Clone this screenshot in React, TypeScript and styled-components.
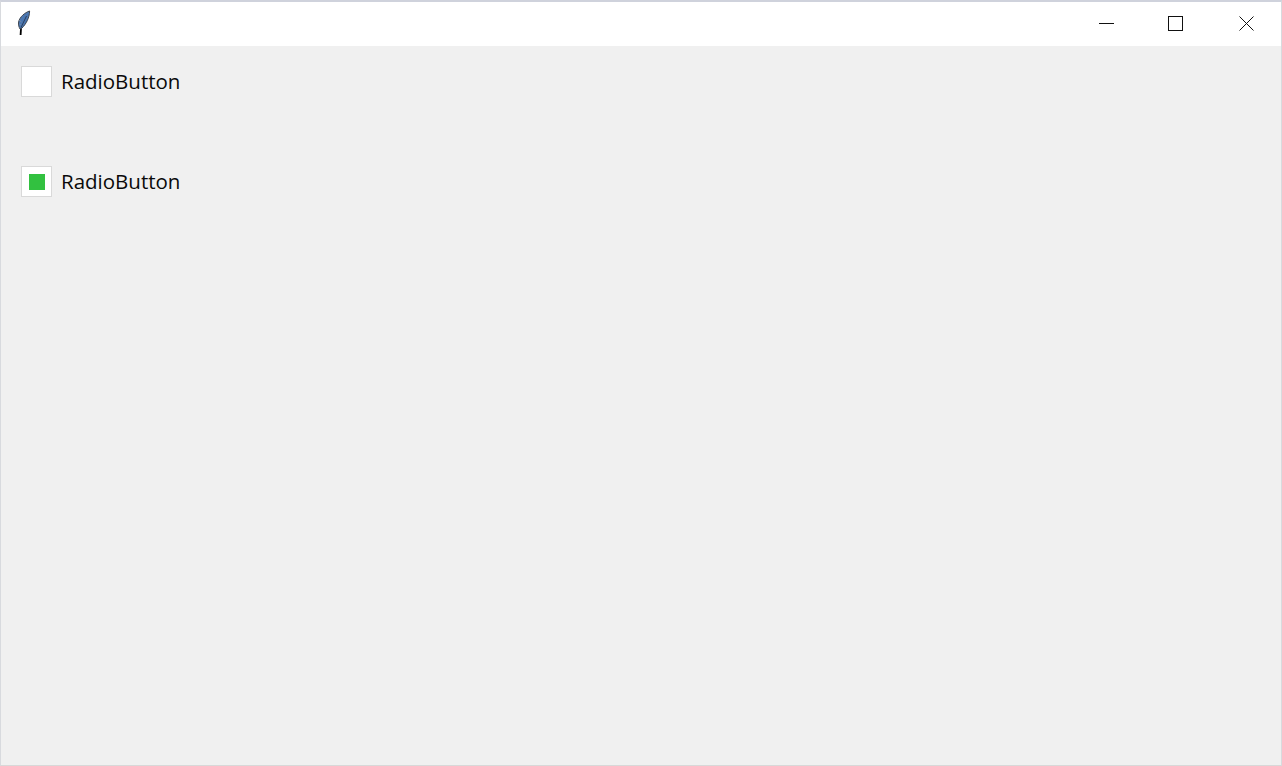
import React from "react";
import styled, { createGlobalStyle } from "styled-components";

const Global = createGlobalStyle`
  html, body { margin: 0; padding: 0; height: 100%; background: #f0f0f0; }
  #root { height: 100%; }
`;

const Win = styled.div`
  box-sizing: border-box;
  width: 1282px;
  height: 766px;
  display: flex;
  flex-direction: column;
  overflow: hidden;
  background: #f0f0f0;
  border: 1px solid #d8dade;
  border-top: 2px solid #cfd2dc;
  border-bottom-color: #d8d8d8;
`;

const TitleBar = styled.header`
  height: 44px;
  flex: none;
  background: #fff;
  display: flex;
  align-items: flex-start;
  justify-content: space-between;
`;

const AppIcon = styled.svg`
  display: block;
  width: 14px;
  height: 25px;
  margin: 8px 0 0 16px;
`;

const Controls = styled.div`
  display: flex;
  height: 100%;
`;

const CtrlButton = styled.button<{ $inset: number }>`
  box-sizing: border-box;
  width: 70px;
  height: 100%;
  padding: 14px 0 0 ${(p) => p.$inset}px;
  border: 0;
  background: transparent;
  display: flex;
  align-items: flex-start;
  justify-content: flex-start;
  svg { display: block; width: 15px; height: 15px; }
`;

const Content = styled.main`
  flex: 1;
  display: flex;
  flex-direction: column;
  gap: 69px;
  padding: 20px 0 0 20px;
`;

const Radio = styled.label`
  display: flex;
  align-items: center;
  gap: 9px;
  height: 31px;
`;

const Indicator = styled.span`
  box-sizing: border-box;
  width: 31px;
  height: 31px;
  background: #fff;
  border: 1px solid #d9d9d9;
  display: flex;
  align-items: center;
  justify-content: center;
`;

const Dot = styled.span`
  width: 16px;
  height: 16px;
  background: #32c140;
`;

const Text = styled.span`
  font-family: "Open Sans", "Noto Sans", sans-serif;
  font-size: 20.5px;
  color: #0a0a0a;
  line-height: 31px;
`;

export default function App() {
  return (
    <Win>
      <Global />
      <TitleBar>
        <AppIcon viewBox="0 0 14 25">
          <path d="M4 18 L3.6 25" stroke="#000" strokeWidth="1.8" fill="none" />
          <path d="M12.6 1 C8 2.5 2.5 7 1.6 12 C1.2 15 2 17 3 19 L5 18 C9 14 12.5 8 12.6 1 Z" fill="#4a76b0" stroke="#3f4650" strokeWidth="1" />
          <path d="M4 17.5 L9.5 6" stroke="#22324c" strokeWidth="0.8" fill="none" />
          <path d="M2 10 L4.5 12 M2.4 14 L4 15" stroke="#8b96a6" strokeWidth="0.7" fill="none" />
        </AppIcon>
        <Controls>
          <CtrlButton $inset={28} aria-label="minimize">
            <svg viewBox="0 0 15 15"><path d="M0 7.5 H15" stroke="#111" strokeWidth="1" /></svg>
          </CtrlButton>
          <CtrlButton $inset={27} aria-label="maximize">
            <svg viewBox="0 0 15 15"><rect x="0.5" y="0.5" width="14" height="14" fill="none" stroke="#111" strokeWidth="1" /></svg>
          </CtrlButton>
          <CtrlButton $inset={28} aria-label="close">
            <svg viewBox="0 0 15 15"><path d="M0.5 0.5 L14.5 14.5 M14.5 0.5 L0.5 14.5" stroke="#111" strokeWidth="1" fill="none" /></svg>
          </CtrlButton>
        </Controls>
      </TitleBar>
      <Content>
        <Radio>
          <Indicator />
          <Text>RadioButton</Text>
        </Radio>
        <Radio>
          <Indicator><Dot /></Indicator>
          <Text>RadioButton</Text>
        </Radio>
      </Content>
    </Win>
  );
}
